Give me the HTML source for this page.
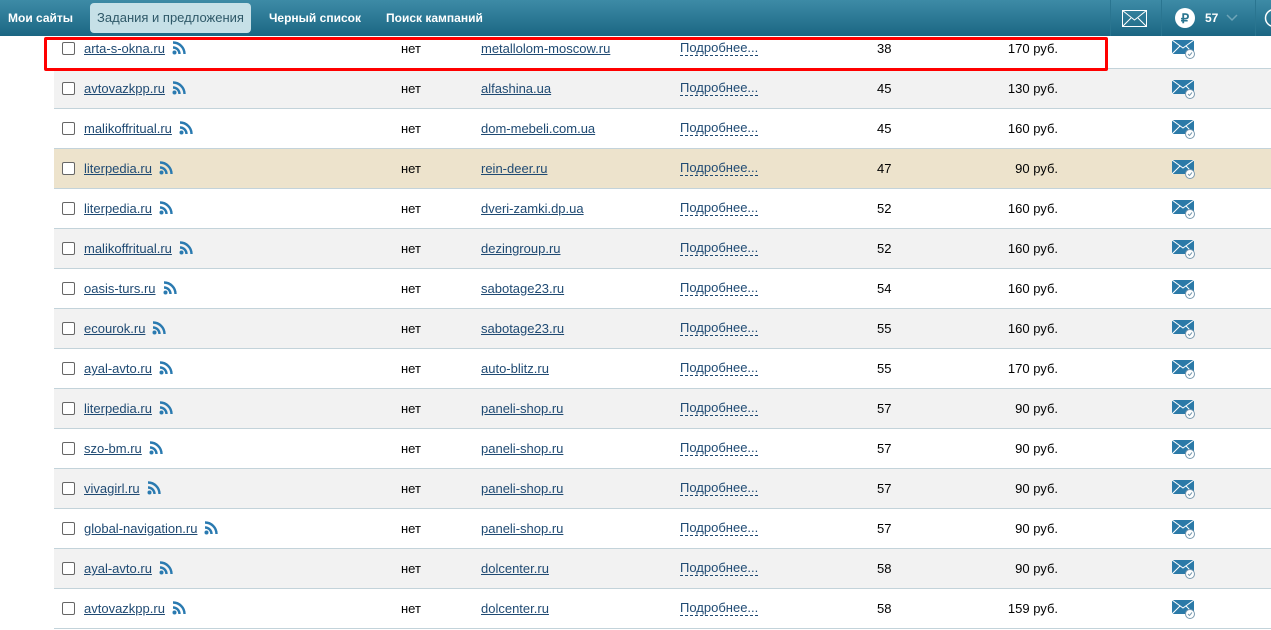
<!DOCTYPE html>
<html><head><meta charset="utf-8"><style>
body{margin:0;width:1271px;height:630px;overflow:hidden;background:#fff;font-family:"Liberation Sans",Tahoma,sans-serif;font-size:13px;position:relative}
.hdr{position:absolute;left:0;top:0;width:1271px;height:36px;background:linear-gradient(#3d8ba6,#1b6683);z-index:5}
.hdr span{position:absolute;top:11px;color:#fff;font-weight:bold;font-size:12px}
.tab{position:absolute;left:90px;top:3px;width:161px;height:30px;background:#c6e0e7;border-radius:4px;color:#2e5868;font-size:13px;line-height:30px;text-align:center}
.div{position:absolute;top:0;width:1px;height:36px;background:#2a7590}
.row{position:absolute;left:54px;width:1217px;height:39px;border-bottom:1px solid #c3d3da}
.row>*{position:absolute;top:12px}
.cb{left:8px;top:13px!important;width:11px;height:11px;border:1px solid #666;border-radius:2px;background:#fff}
a{color:#1f4a73;text-decoration:underline}
.d{color:#1f4a73;border-bottom:1px dashed #1f4a73;line-height:14px}
.lk{left:30px;white-space:nowrap}
.lk svg{margin-left:7px;vertical-align:-2px}
.n{left:823px}
.p{left:900px;width:104px;text-align:right}
.m{left:1118px;top:11px!important}
</style></head><body>
<div class="hdr">
<span style="left:8px">Мои сайты</span>
<div class="tab">Задания и предложения</div>
<span style="left:269px">Черный список</span>
<span style="left:386px">Поиск кампаний</span>
<div class="div" style="left:1110px"></div>
<div class="div" style="left:1161px"></div>
<div class="div" style="left:1255px"></div>
<svg style="position:absolute;left:1122px;top:10px" width="25" height="17" viewBox="0 0 25 17"><rect x="0.5" y="0.5" width="24" height="16" fill="none" stroke="#fff"/><path d="M0.5 0.5L12.5 10L24.5 0.5M0.5 16.5L9 8M24.5 16.5L16 8" fill="none" stroke="#fff"/></svg>
<svg style="position:absolute;left:1175px;top:8px" width="20" height="20"><circle cx="10" cy="10" r="10" fill="#fff"/><text x="10" y="15" text-anchor="middle" font-size="13" font-weight="bold" fill="#2a7590" font-family="Liberation Sans">₽</text></svg>
<span style="left:1205px">57</span>
<svg style="position:absolute;left:1226px;top:14px" width="12" height="8"><path d="M1 1L6 6L11 1" fill="none" stroke="#6fa5b8" stroke-width="1.5"/></svg>
<svg style="position:absolute;left:1264px;top:8px" width="12" height="20"><circle cx="10" cy="10" r="8.5" fill="none" stroke="#fff" stroke-width="1.5"/></svg>
</div>
<div id="rows"></div>
<div style="position:absolute;left:44px;top:37px;width:1058px;height:28px;border:3px solid #f00;border-radius:2px;z-index:4"></div>
<script>
var d=[["arta-s-okna.ru","metallolom-moscow.ru",38,"170"],["avtovazkpp.ru","alfashina.ua",45,"130"],["malikoffritual.ru","dom-mebeli.com.ua",45,"160"],["literpedia.ru","rein-deer.ru",47,"90"],["literpedia.ru","dveri-zamki.dp.ua",52,"160"],["malikoffritual.ru","dezingroup.ru",52,"160"],["oasis-turs.ru","sabotage23.ru",54,"160"],["ecourok.ru","sabotage23.ru",55,"160"],["ayal-avto.ru","auto-blitz.ru",55,"170"],["literpedia.ru","paneli-shop.ru",57,"90"],["szo-bm.ru","paneli-shop.ru",57,"90"],["vivagirl.ru","paneli-shop.ru",57,"90"],["global-navigation.ru","paneli-shop.ru",57,"90"],["ayal-avto.ru","dolcenter.ru",58,"90"],["avtovazkpp.ru","dolcenter.ru",58,"159"]];
var rss='<svg width="14" height="14" viewBox="0 0 14 14"><circle cx="2.5" cy="11.5" r="2" fill="#2a7ab0"/><path d="M1 6.5A6.5 6.5 0 0 1 7.5 13M1 1.5A11.5 11.5 0 0 1 12.5 13" fill="none" stroke="#2a7ab0" stroke-width="2.4"/></svg>';
var mail='<svg width="24" height="19" viewBox="0 0 24 19"><rect x="0" y="0" width="22" height="14" fill="#2b7aa8"/><path d="M0 0L11 8L22 0M0 14L8 6M22 14L14 6" fill="none" stroke="#fff" stroke-width="1"/><circle cx="18" cy="14" r="4.5" fill="#fff" stroke="#7a9ab0"/><path d="M16 14l1.5 1.5L20 12.5" fill="none" stroke="#7a9ab0"/></svg>';
var h='';
d.forEach(function(r,i){
var bg=i==3?'#ede3cc':(i%2?'#f2f2f2':'#fff');
h+='<div class="row" style="top:'+(29+40*i)+'px;background:'+bg+'"><div class="cb"></div><span class="lk"><a>'+r[0]+'</a>'+rss+'</span><span style="left:347px">нет</span><a style="left:427px">'+r[1]+'</a><span class="d" style="left:626px">Подробнее...</span><span class="n">'+r[2]+'</span><span class="p">'+r[3]+' руб.</span><span class="m">'+mail+'</span></div>';
});
document.getElementById('rows').innerHTML=h;
</script>
</body></html>
